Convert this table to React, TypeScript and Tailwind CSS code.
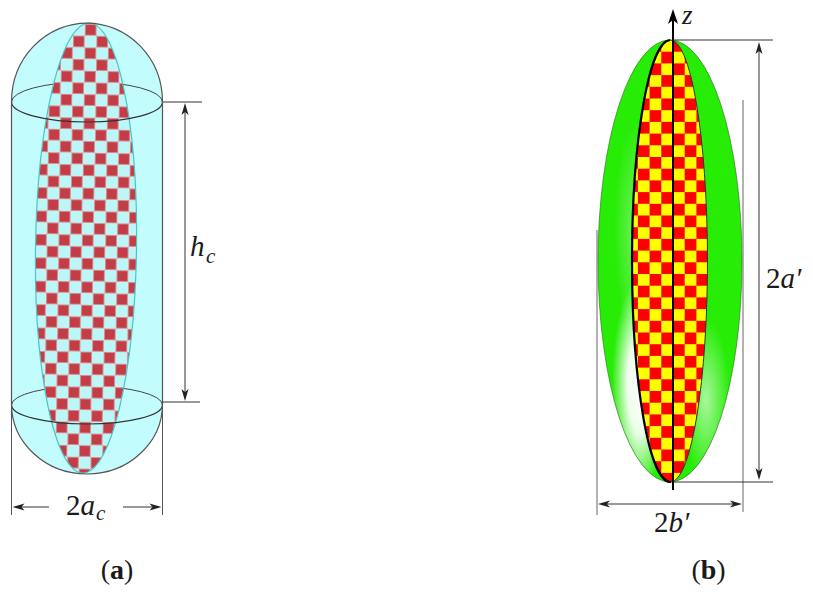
import React from "react";

function ArrowV({ x, y, dir }: { x: number; y: number; dir: "up" | "down" }) {
  const s = dir === "up" ? 1 : -1;
  const pts = `${x},${y} ${x - 3.5},${y + 12 * s} ${x},${y + 9 * s} ${x + 3.5},${y + 12 * s}`;
  return <polygon points={pts} fill="#222" />;
}

function ArrowH({ x, y, dir }: { x: number; y: number; dir: "left" | "right" }) {
  const s = dir === "left" ? 1 : -1;
  const pts = `${x},${y} ${x + 12 * s},${y - 3.5} ${x + 9 * s},${y} ${x + 12 * s},${y + 3.5}`;
  return <polygon points={pts} fill="#222" />;
}

function PanelA() {
  const capsule = "M11.5 102 A75.5 79 0 0 1 162.5 102 L162.5 404 A75.5 70 0 0 1 11.5 404 Z";
  return (
    <svg width="234" height="550" viewBox="0 0 234 550" className="block">
      <defs>
        <pattern id="chkA" width="23.4" height="23.4" patternUnits="userSpaceOnUse" x="35" y="24">
          <rect width="23.4" height="23.4" fill="#bdf6f6" />
          <rect x="0.5" y="0.5" width="10.7" height="10.7" fill="#c23d45" stroke="#d98c92" strokeWidth="1" />
          <rect x="12.2" y="12.2" width="10.7" height="10.7" fill="#c23d45" stroke="#d98c92" strokeWidth="1" />
        </pattern>
      </defs>
      <path d={capsule} fill="#c3fcfc" />
      <path d="M11.5 102 A75.5 20 0 0 1 162.5 102" fill="none" stroke="#444" strokeWidth="1" />
      <path d="M11.5 405 A75.5 19 0 0 1 162.5 405" fill="none" stroke="#444" strokeWidth="1" />
      <ellipse
        cx="86"
        cy="248"
        rx="50.5"
        ry="225"
        transform="rotate(0.8 86 248)"
        fill="url(#chkA)"
        stroke="#4cc4c4"
        strokeWidth="1.2"
      />
      <path d="M11.5 102 A75.5 20 0 0 0 162.5 102" fill="none" stroke="#333" strokeWidth="1.2" />
      <path d="M11.5 405 A75.5 19 0 0 0 162.5 405" fill="none" stroke="#333" strokeWidth="1.2" />
      <path d={capsule} fill="none" stroke="#555" strokeWidth="1.2" />
      <line x1="163" y1="102" x2="202" y2="102" stroke="#333" strokeWidth="1" />
      <line x1="163" y1="402" x2="200" y2="402" stroke="#333" strokeWidth="1" />
      <line x1="11.5" y1="404" x2="11.5" y2="515" stroke="#555" strokeWidth="1" />
      <line x1="162.5" y1="404" x2="162.5" y2="515" stroke="#555" strokeWidth="1" />
      <line x1="185" y1="106" x2="185" y2="398" stroke="#333" strokeWidth="1" />
      <ArrowV x={185} y={103} dir="up" />
      <ArrowV x={185} y={401} dir="down" />
      <text x="190" y="256" fontSize="29" fontStyle="italic" fill="#1a1a1a">
        h
      </text>
      <text x="206" y="263" fontSize="21" fontStyle="italic" fill="#1a1a1a">
        c
      </text>
      <line x1="16" y1="507" x2="49" y2="507" stroke="#333" strokeWidth="1" />
      <line x1="123" y1="507" x2="159" y2="507" stroke="#333" strokeWidth="1" />
      <ArrowH x={12.5} y={507} dir="left" />
      <ArrowH x={161.5} y={507} dir="right" />
      <text x="66" y="515" fontSize="29" fill="#1a1a1a">
        2<tspan fontStyle="italic">a</tspan>
      </text>
      <text x="96" y="520" fontSize="21" fontStyle="italic" fill="#1a1a1a">
        c
      </text>
    </svg>
  );
}

function PanelB() {
  const lens = "M670 40 A38.5 221 0 0 0 671 482 A37 221 0 0 0 670 40 Z";
  return (
    <svg width="233" height="550" viewBox="580 0 233 550" className="block">
      <defs>
        <pattern id="chkB" width="23.4" height="23.4" patternUnits="userSpaceOnUse" x="673" y="40">
          <rect width="23.4" height="23.4" fill="#ffff00" />
          <rect width="11.7" height="11.7" fill="#ff0000" />
          <rect x="11.7" y="11.7" width="11.7" height="11.7" fill="#ff0000" />
        </pattern>
        <radialGradient
          id="hlL"
          gradientUnits="userSpaceOnUse"
          cx="640"
          cy="385"
          r="28"
          gradientTransform="translate(640 385) scale(1 3.8) translate(-640 -385)"
        >
          <stop offset="0" stopColor="#ffffff" stopOpacity="1" />
          <stop offset="0.45" stopColor="#ffffff" stopOpacity="0.92" />
          <stop offset="1" stopColor="#ffffff" stopOpacity="0" />
        </radialGradient>
        <radialGradient
          id="hlR"
          gradientUnits="userSpaceOnUse"
          cx="706"
          cy="400"
          r="24"
          gradientTransform="translate(706 400) scale(1 3.4) translate(-706 -400)"
        >
          <stop offset="0" stopColor="#ffffff" stopOpacity="0.6" />
          <stop offset="1" stopColor="#ffffff" stopOpacity="0" />
        </radialGradient>
        <radialGradient
          id="hlT"
          gradientUnits="userSpaceOnUse"
          cx="636"
          cy="230"
          r="22"
          gradientTransform="translate(636 230) scale(1 5) translate(-636 -230)"
        >
          <stop offset="0" stopColor="#ffffff" stopOpacity="0.35" />
          <stop offset="1" stopColor="#ffffff" stopOpacity="0" />
        </radialGradient>
      </defs>
      <line x1="597" y1="230" x2="597" y2="515" stroke="#666" strokeWidth="1" />
      <line x1="743" y1="100" x2="743" y2="512" stroke="#666" strokeWidth="1" />
      <ellipse cx="670" cy="261" rx="72" ry="221" fill="#26ec06" />
      <ellipse cx="670" cy="261" rx="72" ry="221" fill="url(#hlT)" />
      <ellipse cx="670" cy="261" rx="72" ry="221" fill="url(#hlL)" />
      <ellipse cx="670" cy="261" rx="72" ry="221" fill="url(#hlR)" />
      <ellipse cx="670" cy="261" rx="72" ry="221" fill="none" stroke="#2a6a1a" strokeWidth="0.6" />
      <path d={lens} fill="url(#chkB)" />
      <path d="M670 40 A38.5 221 0 0 0 671 482" fill="none" stroke="#000" strokeWidth="2.2" />
      <path d="M671 482 A37 221 0 0 0 670 40" fill="none" stroke="#333" strokeWidth="1" />
      <line x1="673" y1="20" x2="673" y2="490" stroke="#000" strokeWidth="2" />
      <polygon points="673,9 668,24 673,20 678,24" fill="#000" />
      <text x="682" y="24" fontSize="27" fontStyle="italic" fill="#1a1a1a">
        z
      </text>
      <line x1="673" y1="40" x2="773" y2="40" stroke="#333" strokeWidth="1" />
      <line x1="673" y1="482" x2="773" y2="482" stroke="#333" strokeWidth="1" />
      <line x1="759" y1="46" x2="759" y2="476" stroke="#333" strokeWidth="1" />
      <ArrowV x={759} y={42} dir="up" />
      <ArrowV x={759} y={480} dir="down" />
      <text x="766" y="288" fontSize="29" fill="#1a1a1a">
        2<tspan fontStyle="italic">a′</tspan>
      </text>
      <line x1="602" y1="504" x2="738" y2="504" stroke="#333" strokeWidth="1" />
      <ArrowH x={598} y={504} dir="left" />
      <ArrowH x={742} y={504} dir="right" />
      <text x="654" y="532" fontSize="29" fill="#1a1a1a">
        2<tspan fontStyle="italic">b′</tspan>
      </text>
    </svg>
  );
}

export default function App() {
  return (
    <div className="w-[813px] h-[592px] bg-white flex justify-between overflow-hidden font-['Liberation_Serif','DejaVu_Serif',serif] text-[#1a1a1a]">
      <div className="w-[234px] flex flex-col">
        <PanelA />
        <div className="h-[40px] leading-[40px] text-center text-[28px]">
          (<span className="font-bold">a</span>)
        </div>
      </div>
      <div className="w-[233px] flex flex-col">
        <PanelB />
        <div className="h-[40px] leading-[40px] pl-[24px] text-center text-[28px]">
          (<span className="font-bold">b</span>)
        </div>
      </div>
    </div>
  );
}
